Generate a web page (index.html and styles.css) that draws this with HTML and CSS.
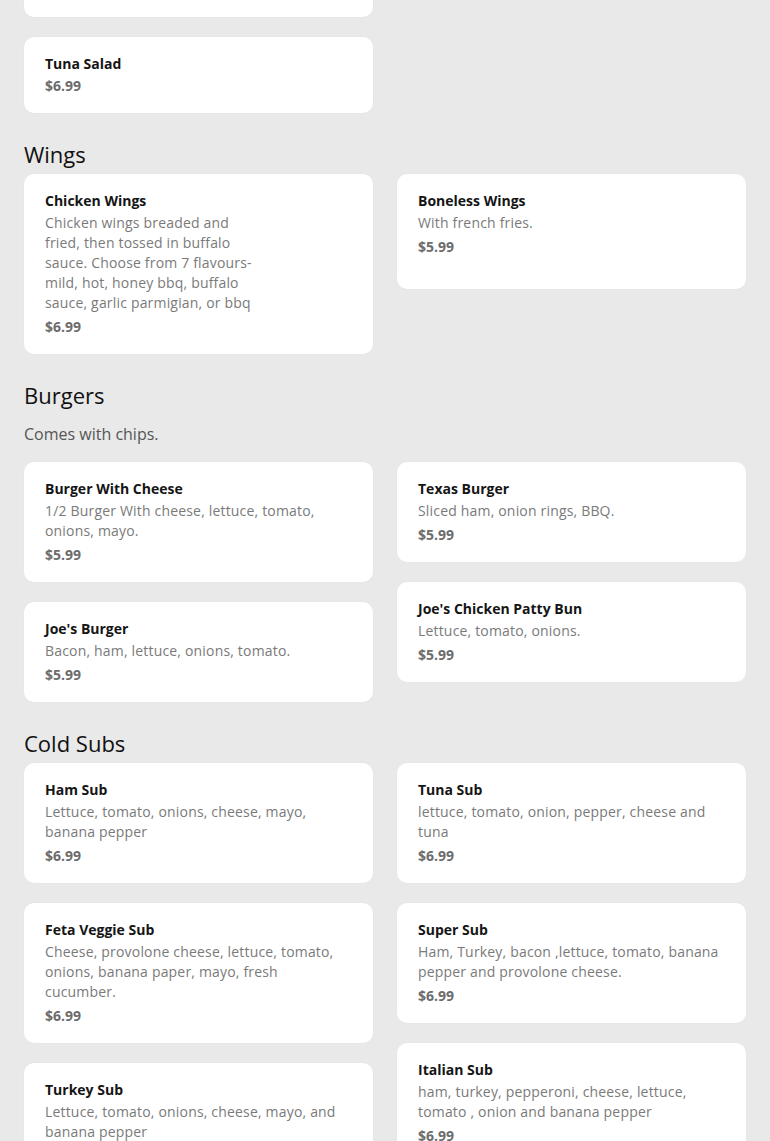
FILE: index.html
```html
<!DOCTYPE html>
<html lang="en">
<head>
<meta charset="utf-8">
<title>Menu</title>
<link rel="stylesheet" href="styles.css">
</head>
<body>
<main class="page">
  <section class="section section--first">
    <div class="grid">
      <div class="col">
        <div class="card card--hidden-top"><div class="card-title">Chicken Salad</div><div class="card-price">$6.99</div></div>
        <div class="card"><div class="card-title">Tuna Salad</div><div class="card-price">$6.99</div></div>
      </div>
      <div class="col"></div>
    </div>
  </section>

  <section class="section">
    <h2 class="section-title">Wings</h2>
    <div class="grid">
      <div class="col">
        <div class="card">
          <div class="card-title">Chicken Wings</div>
          <div class="card-desc card-desc--narrow">Chicken wings breaded and fried, then tossed in buffalo sauce. Choose from 7 flavours- mild, hot, honey bbq, buffalo sauce, garlic parmigian, or bbq</div>
          <div class="card-price">$6.99</div>
        </div>
      </div>
      <div class="col">
        <div class="card card--tall">
          <div class="card-title">Boneless Wings</div>
          <div class="card-desc">With french fries.</div>
          <div class="card-price">$5.99</div>
        </div>
      </div>
    </div>
  </section>

  <section class="section">
    <h2 class="section-title">Burgers</h2>
    <p class="section-desc">Comes with chips.</p>
    <div class="grid">
      <div class="col">
        <div class="card">
          <div class="card-title">Burger With Cheese</div>
          <div class="card-desc">1/2 Burger With cheese, lettuce, tomato, onions, mayo.</div>
          <div class="card-price">$5.99</div>
        </div>
        <div class="card">
          <div class="card-title">Joe's Burger</div>
          <div class="card-desc">Bacon, ham, lettuce, onions, tomato.</div>
          <div class="card-price">$5.99</div>
        </div>
      </div>
      <div class="col">
        <div class="card">
          <div class="card-title">Texas Burger</div>
          <div class="card-desc">Sliced ham, onion rings, BBQ.</div>
          <div class="card-price">$5.99</div>
        </div>
        <div class="card">
          <div class="card-title">Joe's Chicken Patty Bun</div>
          <div class="card-desc">Lettuce, tomato, onions.</div>
          <div class="card-price">$5.99</div>
        </div>
      </div>
    </div>
  </section>

  <section class="section">
    <h2 class="section-title">Cold Subs</h2>
    <div class="grid">
      <div class="col">
        <div class="card">
          <div class="card-title">Ham Sub</div>
          <div class="card-desc">Lettuce, tomato, onions, cheese, mayo, banana pepper</div>
          <div class="card-price">$6.99</div>
        </div>
        <div class="card">
          <div class="card-title">Feta Veggie Sub</div>
          <div class="card-desc">Cheese, provolone cheese, lettuce, tomato, onions, banana paper, mayo, fresh cucumber.</div>
          <div class="card-price">$6.99</div>
        </div>
        <div class="card">
          <div class="card-title">Turkey Sub</div>
          <div class="card-desc">Lettuce, tomato, onions, cheese, mayo, and banana pepper</div>
          <div class="card-price">$6.99</div>
        </div>
      </div>
      <div class="col">
        <div class="card">
          <div class="card-title">Tuna Sub</div>
          <div class="card-desc">lettuce, tomato, onion, pepper, cheese and tuna</div>
          <div class="card-price">$6.99</div>
        </div>
        <div class="card">
          <div class="card-title">Super Sub</div>
          <div class="card-desc">Ham, Turkey, bacon ,lettuce, tomato, banana pepper and provolone cheese.</div>
          <div class="card-price">$6.99</div>
        </div>
        <div class="card">
          <div class="card-title">Italian Sub</div>
          <div class="card-desc">ham, turkey, pepperoni, cheese, lettuce, tomato , onion and banana pepper</div>
          <div class="card-price">$6.99</div>
        </div>
      </div>
    </div>
  </section>
</main>
</body>
</html>
```

FILE: styles.css
```css
html, body {
  margin: 0;
  padding: 0;
  background: #e9e9e9;
}

body {
  font-family: "Open Sans", "Liberation Sans", sans-serif;
  color: #111;
  overflow: hidden;
}

.page {
  padding: 0 24px 40px;
  margin-top: -73px;
}

.section {
  padding-top: 26px;
}

.section--first {
  padding-top: 0;
}

.section-title {
  margin: 0 0 5px;
  font-size: 22px;
  line-height: 30px;
  font-weight: 400;
  color: #111;
}

.section-desc {
  margin: 12px 0 16px;
  font-size: 16px;
  line-height: 24px;
  color: #555;
}

.grid {
  display: grid;
  grid-template-columns: 1fr 1fr;
  column-gap: 24px;
  align-items: start;
}

.col {
  display: flex;
  flex-direction: column;
  gap: 20px;
}

.card {
  background: #fff;
  border-radius: 10px;
  padding: 17px 26px 17px 21px;
  box-shadow: 0 0 2px rgba(0, 0, 0, 0.04);
}

.card--hidden-top {
  padding-bottom: 31px;
}

.card--tall {
  padding-bottom: 32px;
}

.card-title {
  font-size: 14px;
  line-height: 20px;
  font-weight: 700;
  color: #151515;
  margin-bottom: 2px;
}

.card-desc {
  font-size: 14px;
  line-height: 20px;
  color: #7a7a7a;
  margin-top: 1px;
  margin-bottom: 4px;
  letter-spacing: 0.18px;
}

.card-desc--narrow {
  max-width: 220px;
}

.card-price {
  font-size: 14px;
  line-height: 20px;
  font-weight: 700;
  color: #6c6c6c;
}
```
